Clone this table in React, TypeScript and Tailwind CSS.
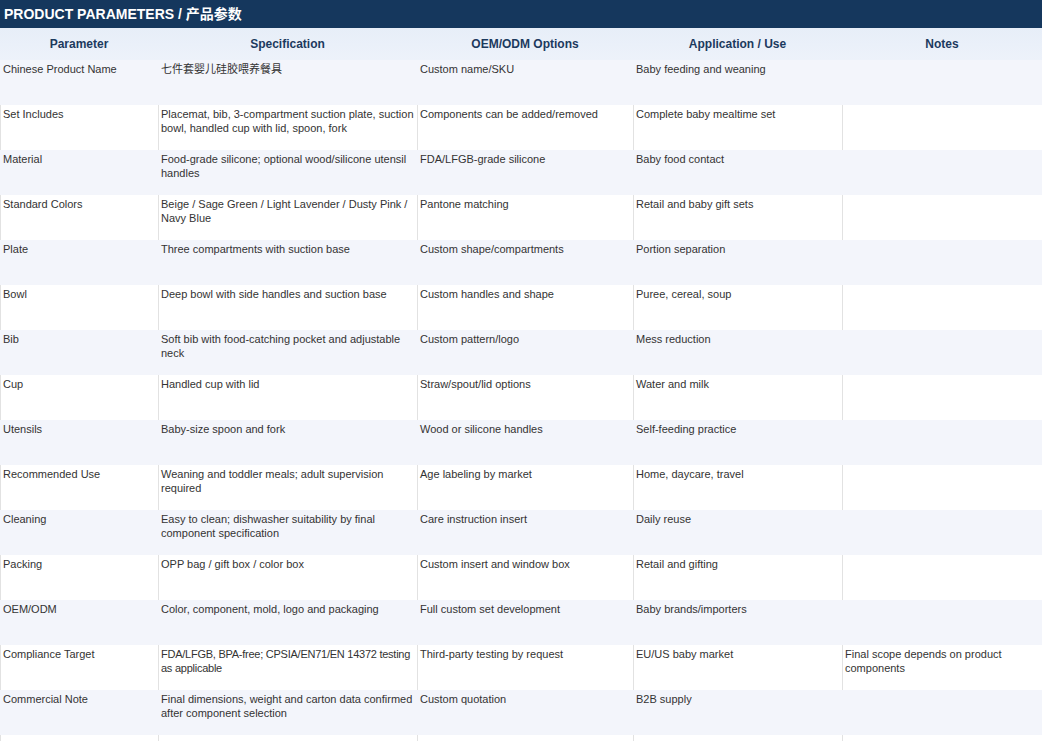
import type { ReactNode } from 'react'

const ROWS: [string, string, string, string, string][] = [
  ['Chinese Product Name', '七件套婴儿硅胶喂养餐具', 'Custom name/SKU', 'Baby feeding and weaning', ''],
  ['Set Includes', 'Placemat, bib, 3-compartment suction plate, suction bowl, handled cup with lid, spoon, fork', 'Components can be added/removed', 'Complete baby mealtime set', ''],
  ['Material', 'Food-grade silicone; optional wood/silicone utensil handles', 'FDA/LFGB-grade silicone', 'Baby food contact', ''],
  ['Standard Colors', 'Beige / Sage Green / Light Lavender / Dusty Pink / Navy Blue', 'Pantone matching', 'Retail and baby gift sets', ''],
  ['Plate', 'Three compartments with suction base', 'Custom shape/compartments', 'Portion separation', ''],
  ['Bowl', 'Deep bowl with side handles and suction base', 'Custom handles and shape', 'Puree, cereal, soup', ''],
  ['Bib', 'Soft bib with food-catching pocket and adjustable neck', 'Custom pattern/logo', 'Mess reduction', ''],
  ['Cup', 'Handled cup with lid', 'Straw/spout/lid options', 'Water and milk', ''],
  ['Utensils', 'Baby-size spoon and fork', 'Wood or silicone handles', 'Self-feeding practice', ''],
  ['Recommended Use', 'Weaning and toddler meals; adult supervision required', 'Age labeling by market', 'Home, daycare, travel', ''],
  ['Cleaning', 'Easy to clean; dishwasher suitability by final component specification', 'Care instruction insert', 'Daily reuse', ''],
  ['Packing', 'OPP bag / gift box / color box', 'Custom insert and window box', 'Retail and gifting', ''],
  ['OEM/ODM', 'Color, component, mold, logo and packaging', 'Full custom set development', 'Baby brands/importers', ''],
  ['Compliance Target', 'FDA/LFGB, BPA-free; CPSIA/EN71/EN 14372 testing as applicable', 'Third-party testing by request', 'EU/US baby market', 'Final scope depends on product components'],
  ['Commercial Note', 'Final dimensions, weight and carton data confirmed after component selection', 'Custom quotation', 'B2B supply', ''],
  ['', '', '', '', ''],
]

const HEAD = ['Parameter', 'Specification', 'OEM/ODM Options', 'Application / Use', 'Notes']
const GRID = 'grid grid-cols-[158px_259px_216px_209px_1fr]'

function Cell({ children, striped, tight }: { children: ReactNode; striped: boolean; tight: boolean }) {
  return (
    <div className={`h-[45px] pt-[2px] pl-[2px] text-[11px] leading-[14px] text-[#333] border-l ${striped ? 'border-transparent' : 'border-[#e2e2e2]'} ${tight ? 'tracking-[-0.25px]' : ''}`}>
      {children}
    </div>
  )
}

export default function App() {
  return (
    <div className="w-[1042px] h-[741px] overflow-hidden bg-white" style={{ fontFamily: '"Liberation Sans", Arial, "Noto Sans CJK SC", sans-serif' }}>
      <div className="h-[28px] bg-[#15375d] text-white font-bold text-[14px] flex items-center pl-[4px]">
        PRODUCT PARAMETERS / 产品参数
      </div>
      <div className={`${GRID} h-[32px] bg-gradient-to-b from-[#e7eef8] to-[#edf2fa]`}>
        {HEAD.map(h => (
          <div key={h} className="flex items-center justify-center text-[12px] font-bold text-[#1c3a5e]">{h}</div>
        ))}
      </div>
      {ROWS.map((r, i) => {
        const striped = i % 2 === 0 && i < 15
        return (
          <div key={i} className={`${GRID} ${striped ? 'bg-[#f3f5fb]' : 'bg-white'}`}>
            {r.map((c, j) => (
              <Cell key={j} striped={striped} tight={i === 13 && j === 1}>{c}</Cell>
            ))}
          </div>
        )
      })}
    </div>
  )
}
